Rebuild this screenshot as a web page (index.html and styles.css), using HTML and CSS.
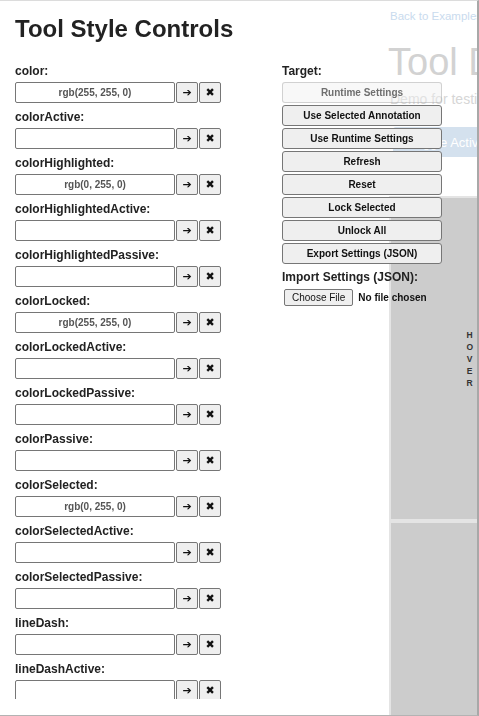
FILE: index.html
```html
<!DOCTYPE html>
<html lang="en">
<head>
<meta charset="utf-8">
<title>Tool Style Controls</title>
<link rel="stylesheet" href="styles.css">
</head>
<body>
<div class="page">
  <div class="page-side"></div>
  <main class="page-main">
    <a class="back-link">Back to Examples</a>
    <h1 class="demo-title">Tool Demo</h1>
    <p class="demo-desc">Demo for testing tool styles</p>
    <div class="demo-actions"><button class="demo-btn">Toggle Active</button></div>
    <div class="viewports">
      <div class="viewport">
        <div class="vp-label"><span>H</span><span>O</span><span>V</span><span>E</span><span>R</span></div>
      </div>
      <div class="viewport"></div>
    </div>
  </main>
</div>

<aside class="panel">
  <h2 class="panel-title">Tool Style Controls</h2>
  <div class="panel-body">
    <div class="props">
      <div class="prop"><label class="prop-label">color:</label><div class="prop-row"><input class="prop-input" value="rgb(255, 255, 0)"><button class="icon-btn">➔</button><button class="icon-btn">✖</button></div></div>
      <div class="prop"><label class="prop-label">colorActive:</label><div class="prop-row"><input class="prop-input" value=""><button class="icon-btn">➔</button><button class="icon-btn">✖</button></div></div>
      <div class="prop"><label class="prop-label">colorHighlighted:</label><div class="prop-row"><input class="prop-input" value="rgb(0, 255, 0)"><button class="icon-btn">➔</button><button class="icon-btn">✖</button></div></div>
      <div class="prop"><label class="prop-label">colorHighlightedActive:</label><div class="prop-row"><input class="prop-input" value=""><button class="icon-btn">➔</button><button class="icon-btn">✖</button></div></div>
      <div class="prop"><label class="prop-label">colorHighlightedPassive:</label><div class="prop-row"><input class="prop-input" value=""><button class="icon-btn">➔</button><button class="icon-btn">✖</button></div></div>
      <div class="prop"><label class="prop-label">colorLocked:</label><div class="prop-row"><input class="prop-input" value="rgb(255, 255, 0)"><button class="icon-btn">➔</button><button class="icon-btn">✖</button></div></div>
      <div class="prop"><label class="prop-label">colorLockedActive:</label><div class="prop-row"><input class="prop-input" value=""><button class="icon-btn">➔</button><button class="icon-btn">✖</button></div></div>
      <div class="prop"><label class="prop-label">colorLockedPassive:</label><div class="prop-row"><input class="prop-input" value=""><button class="icon-btn">➔</button><button class="icon-btn">✖</button></div></div>
      <div class="prop"><label class="prop-label">colorPassive:</label><div class="prop-row"><input class="prop-input" value=""><button class="icon-btn">➔</button><button class="icon-btn">✖</button></div></div>
      <div class="prop"><label class="prop-label">colorSelected:</label><div class="prop-row"><input class="prop-input" value="rgb(0, 255, 0)"><button class="icon-btn">➔</button><button class="icon-btn">✖</button></div></div>
      <div class="prop"><label class="prop-label">colorSelectedActive:</label><div class="prop-row"><input class="prop-input" value=""><button class="icon-btn">➔</button><button class="icon-btn">✖</button></div></div>
      <div class="prop"><label class="prop-label">colorSelectedPassive:</label><div class="prop-row"><input class="prop-input" value=""><button class="icon-btn">➔</button><button class="icon-btn">✖</button></div></div>
      <div class="prop"><label class="prop-label">lineDash:</label><div class="prop-row"><input class="prop-input" value=""><button class="icon-btn">➔</button><button class="icon-btn">✖</button></div></div>
      <div class="prop"><label class="prop-label">lineDashActive:</label><div class="prop-row"><input class="prop-input" value=""><button class="icon-btn">➔</button><button class="icon-btn">✖</button></div></div>
      <div class="prop"><label class="prop-label">lineDashHighlighted:</label><div class="prop-row"><input class="prop-input" value=""><button class="icon-btn">➔</button><button class="icon-btn">✖</button></div></div>
    </div>
    <div class="actions">
      <div class="action-label">Target:</div>
      <button class="action-btn" disabled>Runtime Settings</button>
      <button class="action-btn">Use Selected Annotation</button>
      <button class="action-btn">Use Runtime Settings</button>
      <button class="action-btn">Refresh</button>
      <button class="action-btn">Reset</button>
      <button class="action-btn">Lock Selected</button>
      <button class="action-btn">Unlock All</button>
      <button class="action-btn">Export Settings (JSON)</button>
      <div class="action-label import-label">Import Settings (JSON):</div>
      <input type="file" class="file-input">
    </div>
  </div>
</aside>
</body>
</html>
```

FILE: styles.css
```css
* { box-sizing: border-box; }

html, body {
  margin: 0;
  height: 100%;
  overflow: hidden;
}

body {
  font-family: "Liberation Sans", Arial, Helvetica, sans-serif;
  background: #fff;
  color: #222;
}

/* ---------- underlying demo page ---------- */
.page {
  display: flex;
  height: 716px;
}

.page-side {
  width: 388px;
  flex: none;
}

.page-main {
  width: 91px;
  flex: none;
  overflow: hidden;
  white-space: nowrap;
  display: flex;
  flex-direction: column;
}

.back-link {
  font-size: 11.5px;
  line-height: 15px;
  color: #c9dbee;
  margin: 9px 0 0 2px;
}

.demo-title {
  font-size: 38px;
  font-weight: normal;
  line-height: 44px;
  color: #d2d2d2;
  margin: 16px 0 0 0;
}

.demo-desc {
  font-size: 14px;
  line-height: 16px;
  color: #d6d6d6;
  margin: 7px 0 0 2px;
}

.demo-actions {
  margin: 20px 0 0 5px;
}

.demo-btn {
  height: 30px;
  padding: 0 16px;
  border: none;
  border-radius: 3px;
  background: #d4e1ee;
  color: #fff;
  font-family: "Liberation Sans", Arial, sans-serif;
  font-size: 13px;
}

.viewports {
  margin: 39px 0 0 1px;
  flex: 1;
  display: grid;
  grid-template-rows: 321px 1fr;
  gap: 4px;
  padding: 2px 0 0 2px;
  background: #e4e4e4;
}

.viewport {
  background: #cccccc;
  display: flex;
  align-items: center;
  justify-content: flex-end;
  padding-right: 6px;
}

.vp-label {
  display: flex;
  flex-direction: column;
  align-items: center;
  font-size: 8.5px;
  font-weight: bold;
  line-height: 12px;
  color: #333;
}

/* ---------- style controls panel ---------- */
.panel {
  position: fixed;
  top: 0;
  left: 0;
  width: 479px;
  height: 716px;
  border-top: 1px solid #dcdcdc;
  border-right: 2px solid #a8a8a8;
  border-bottom: 1px solid #b3b3b3;
  padding: 14px 0 0 15px;
}

.panel-title {
  margin: 0 0 21px 0;
  font-size: 24px;
  line-height: 28px;
  font-weight: bold;
  color: #222;
}

.panel-body {
  display: flex;
  height: 635px;
}

.props {
  width: 267px;
  flex: none;
  height: 635px;
  overflow: hidden;
}

.prop-label {
  display: block;
  font-size: 12px;
  line-height: 14px;
  font-weight: bold;
  color: #222;
  margin-bottom: 4px;
}

.prop-row {
  display: flex;
  height: 21px;
  margin-bottom: 7px;
  gap: 1px;
}

.prop-input {
  width: 160px;
  height: 21px;
  padding: 0 4px;
  border: 1px solid #767676;
  border-radius: 2px;
  background: #fff;
  font-family: "Liberation Sans", Arial, sans-serif;
  font-size: 10px;
  font-weight: bold;
  color: #555;
  text-align: center;
}

.icon-btn {
  width: 22px;
  height: 21px;
  padding: 0;
  border: 1px solid #767676;
  border-radius: 2px;
  background: #efefef;
  color: #111;
  font-family: "DejaVu Sans", sans-serif;
  font-size: 11px;
  line-height: 1;
}

.actions {
  width: 160px;
  flex: none;
  display: flex;
  flex-direction: column;
  gap: 2px;
}

.action-label {
  font-size: 12px;
  line-height: 14px;
  font-weight: bold;
  color: #222;
  margin-bottom: 2px;
}

.import-label {
  margin-top: 4px;
  margin-bottom: 3px;
}

.action-btn {
  height: 21px;
  padding: 0;
  border: 1px solid #767676;
  border-radius: 3px;
  background: #efefef;
  color: #111;
  font-family: "Liberation Sans", Arial, sans-serif;
  font-size: 10px;
  font-weight: bold;
}

.action-btn:disabled {
  background: rgba(239, 239, 239, 0.45);
  border-color: rgba(118, 118, 118, 0.3);
  color: #6f6f6f;
}

.file-input {
  margin-left: 2px;
  height: 17px;
  font-family: "Liberation Sans", Arial, sans-serif;
  font-size: 10px;
  font-weight: bold;
  color: #111;
}

.file-input::file-selector-button {
  height: 17px;
  padding: 0 7px;
  margin-right: 5px;
  border: 1px solid #767676;
  border-radius: 2px;
  background: #efefef;
  color: #111;
  font-family: "Liberation Sans", Arial, sans-serif;
  font-size: 10px;
  font-weight: normal;
}
```
